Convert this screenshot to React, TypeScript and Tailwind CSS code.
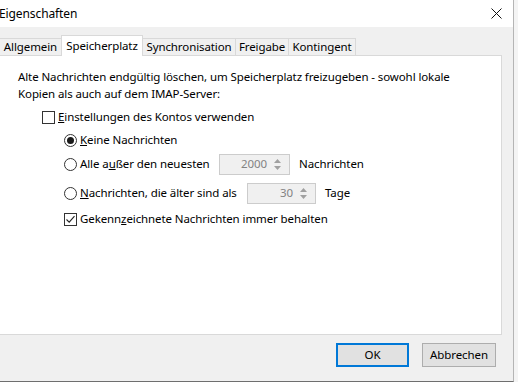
import React from "react";

const font = { fontFamily: '"Noto Sans", "Segoe UI", sans-serif' };

function Check({ checked }: { checked?: boolean }) {
  return (
    <span className="w-[13px] h-[13px] border border-[#333333] bg-white flex items-center justify-center shrink-0">
      {checked && (
        <svg width="11" height="11" viewBox="0 0 11 11">
          <path d="M1.5 5.5 L4.2 8.2 L9.5 2.2" fill="none" stroke="#222" strokeWidth="1.1" />
        </svg>
      )}
    </span>
  );
}

function Radio({ checked }: { checked?: boolean }) {
  return (
    <span className="w-[13px] h-[13px] rounded-full border border-[#333333] bg-white flex items-center justify-center shrink-0">
      {checked && <span className="w-[7px] h-[7px] rounded-full bg-[#1a1a1a]" />}
    </span>
  );
}

function Spin({ value, w }: { value: string; w: string }) {
  return (
    <div className={`${w} h-[21px] border border-[#cccccc] bg-[#f0f0f0] flex items-center`}>
      <span className="flex-1 text-right pr-[4px] text-[#838383]">{value}</span>
      <div className="w-[13px] h-full flex flex-col items-center justify-center gap-[3px] mr-[5px]">
        <svg width="7" height="4" viewBox="0 0 7 4"><path d="M0 4 L3.5 0 L7 4 Z" fill="#a0a0a0" /></svg>
        <svg width="7" height="4" viewBox="0 0 7 4"><path d="M0 0 L3.5 4 L7 0 Z" fill="#a0a0a0" /></svg>
      </div>
    </div>
  );
}

export default function App() {
  const tabs = [
    { t: "Allgemein", w: "w-[63px]" },
    { t: "Speicherplatz", w: "w-[82px]", sel: true },
    { t: "Synchronisation", w: "w-[94px]" },
    { t: "Freigabe", w: "w-[54px]" },
    { t: "Kontingent", w: "w-[68px]" },
  ];
  return (
    <div className="w-[518px] h-[382px] bg-[#f4f4f4] text-[11.5px] tracking-[-0.1px] text-black overflow-hidden" style={font}>
      <div className="w-[514px] h-[382px] border-r border-b border-r-[#b5b5b5] border-b-[#6e6e6e] flex flex-col bg-[#f0f0f0]">
        <div className="h-[27px] bg-white flex items-center justify-between shrink-0">
          <span className="-ml-[1px] text-[12px]">Eigenschaften</span>
          <svg width="11" height="11" viewBox="0 0 11 11" className="mr-[11px]">
            <path d="M0.5 0.5 L10.5 10.5 M10.5 0.5 L0.5 10.5" stroke="#111" strokeWidth="1" />
          </svg>
        </div>
        <div className="flex flex-col flex-1">
          <div className="mt-[8px] h-[21px] flex items-end relative z-10 -ml-[1px]">
            {tabs.map((tab, i) => (
              <div
                key={tab.t}
                className={
                  tab.sel
                    ? `${tab.w} h-[21px] bg-white border-t border-l border-r border-[#d9d9d9] flex items-center justify-center pb-[1px] ${i > 0 ? "-ml-px" : ""}`
                    : `${tab.w} h-[18px] bg-[#f0f0f0] border border-[#d9d9d9] flex items-center justify-center ${i > 0 ? "-ml-px" : ""}`
                }
              >
                {tab.t}
              </div>
            ))}
          </div>
          <div className="-mt-px -ml-[1px] w-[503px] h-[280px] bg-white border border-[#d9d9d9] pl-[18px] pt-[12px] flex flex-col">
            <p className="leading-[17px] h-[34px]">
              Alte Nachrichten endgültig löschen, um Speicherplatz freizugeben - sowohl lokale
              <br />
              Kopien als auch auf dem IMAP-Server:
            </p>
            <div className="mt-[5px] h-[20px] flex items-center ml-[24px] gap-[3px]">
              <Check />
              <span><span className="underline">E</span>instellungen des Kontos verwenden</span>
            </div>
            <div className="mt-[3px] h-[20px] flex items-center ml-[46px] gap-[3px]">
              <Radio checked />
              <span><span className="underline">K</span>eine Nachrichten</span>
            </div>
            <div className="mt-[3px] h-[22px] flex items-center ml-[46px]">
              <Radio />
              <span className="ml-[3px] w-[139px]">Alle a<span className="underline">u</span>ßer den neuesten</span>
              <Spin value="2000" w="w-[71px]" />
              <span className="ml-[9px]">Nachrichten</span>
            </div>
            <div className="mt-[7px] h-[22px] flex items-center ml-[46px]">
              <Radio />
              <span className="ml-[3px] w-[167px]"><span className="underline">N</span>achrichten, die älter sind als</span>
              <Spin value="30" w="w-[69px]" />
              <span className="ml-[9px]">Tage</span>
            </div>
            <div className="mt-[5px] h-[20px] flex items-center ml-[46px] gap-[3px]">
              <Check checked />
              <span>Gekenn<span className="underline">z</span>eichnete Nachrichten immer behalten</span>
            </div>
          </div>
          <div className="flex justify-end gap-[13px] pr-[17px] pt-[8px]">
            <button className="w-[73px] h-[24px] bg-[#e1e1e1] border-2 border-[#0078d7] flex items-center justify-center">OK</button>
            <button className="w-[74px] h-[24px] bg-[#e1e1e1] border border-[#adadad] flex items-center justify-center">Abbrechen</button>
          </div>
        </div>
      </div>
    </div>
  );
}
